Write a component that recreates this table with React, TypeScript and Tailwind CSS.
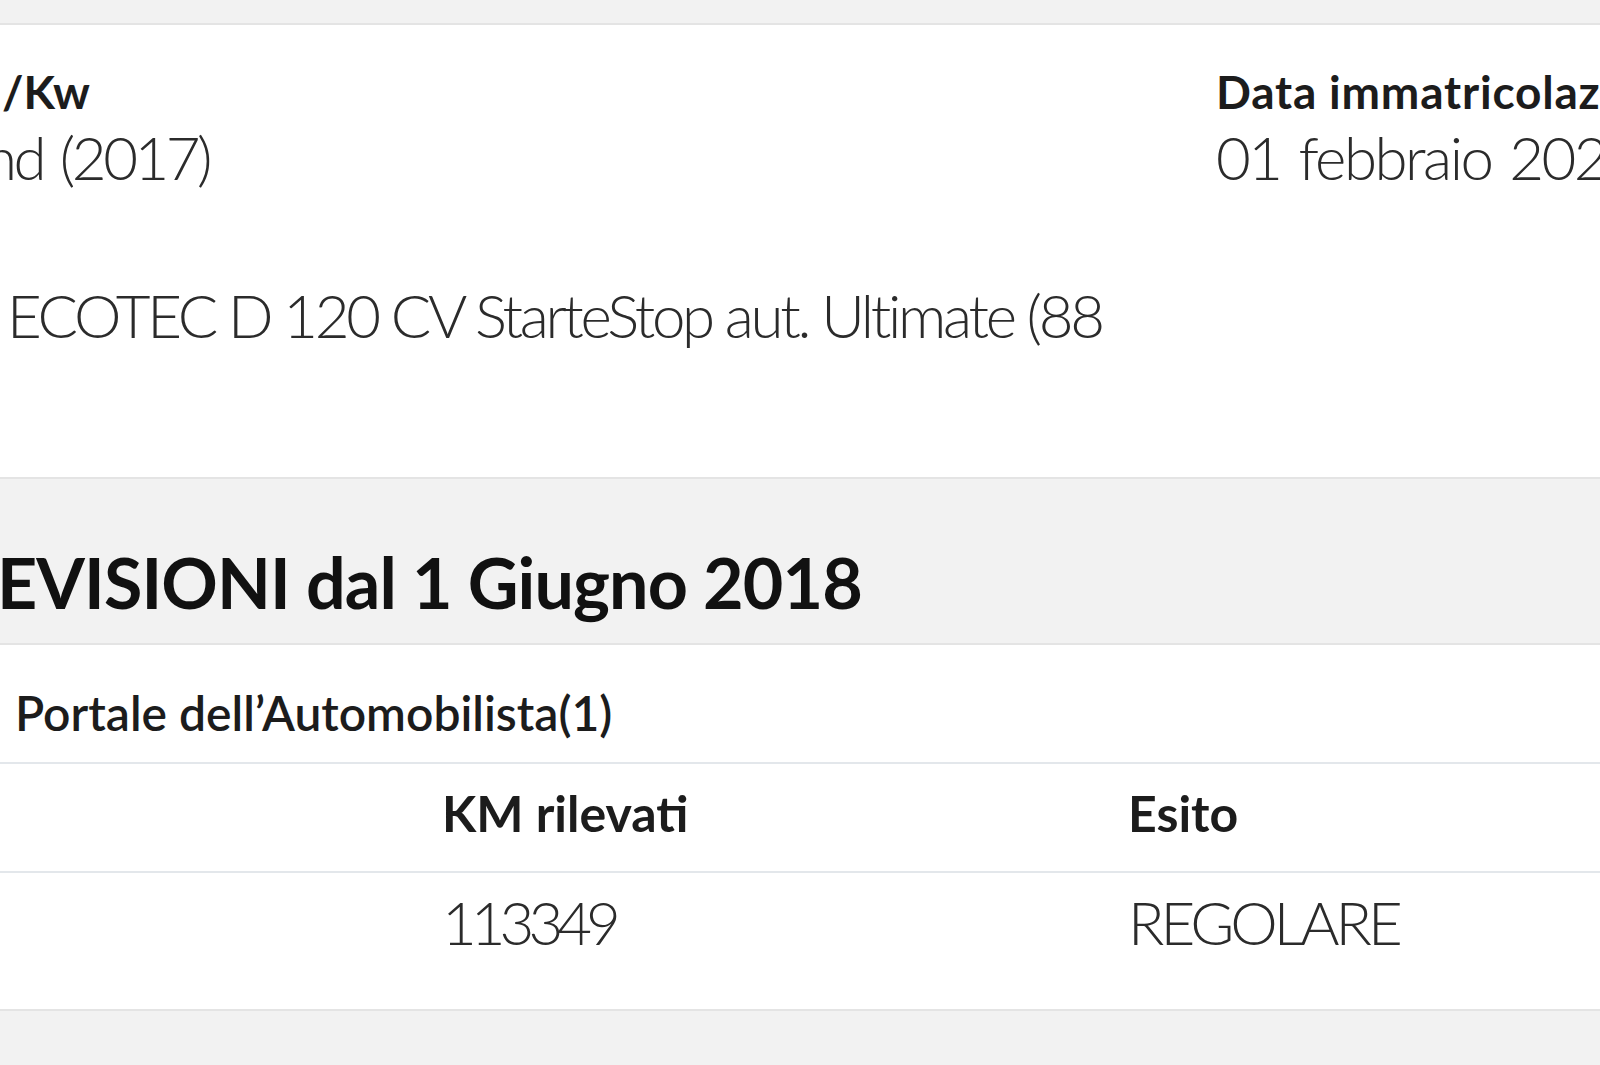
import React from "react";

const font = { fontFamily: "Lato, 'Noto Sans', sans-serif" };

export default function App() {
  return (
    <div
      className="w-[1600px] h-[1065px] overflow-hidden bg-[#f2f2f2] text-[#1c1c1c]"
      style={font}
    >
      <div className="h-[23px]" />
      {/* vehicle data */}
      <section className="bg-white border-y-2 border-[#e4e4e4] pt-[44px] pb-[132px]">
        <div className="flex">
          <div className="w-[1216px] shrink-0">
            <div className="text-[46px] leading-none font-bold whitespace-nowrap ml-[2px]">/Kw</div>
            <div className="mt-[12px] h-[62px] text-[60px] leading-none font-light tracking-[-3.5px] [word-spacing:4px] text-[#2b2b2b] whitespace-nowrap -ml-[16px]">
              nd (2017)
            </div>
          </div>
          <div className="min-w-0 overflow-hidden">
            <div className="text-[46px] leading-none font-bold tracking-[0.8px] whitespace-nowrap">
              Data immatricolazione
            </div>
            <div className="mt-[12px] text-[60px] leading-none font-light tracking-[-2.5px] [word-spacing:4px] text-[#2b2b2b] whitespace-nowrap">
              01 febbraio 2021
            </div>
          </div>
        </div>
        <div className="mt-[96px] ml-[7px] text-[60px] leading-none font-light tracking-[-3.3px] text-[#2b2b2b] whitespace-nowrap">
          ECOTEC D 120 CV StarteStop aut. Ultimate (88
        </div>
      </section>

      {/* title */}
      <section className="pt-[68px] pb-[26px] border-b-2 border-[#e4e4e4]">
        <h2 className="-ml-[3px] text-[70px] leading-none font-bold tracking-[-0.9px] text-[#111] whitespace-nowrap">
          EVISIONI dal 1 Giugno 2018
        </h2>
      </section>

      {/* table */}
      <section className="bg-white border-b-2 border-[#e4e4e4]">
        <div className="pt-[44px] pb-[25px] pl-[15px] border-b-2 border-[#e3e7eb] text-[48px] leading-none font-semibold whitespace-nowrap">
          Portale dell’Automobilista(1)
        </div>
        <div className="grid grid-cols-[442px_686px_1fr] border-b-2 border-[#e3e7eb] pt-[24px] pb-[33px]">
          <div />
          <div className="text-[50px] leading-none font-bold whitespace-nowrap">KM rilevati</div>
          <div className="text-[50px] leading-none font-bold whitespace-nowrap">Esito</div>
        </div>
        <div className="grid grid-cols-[442px_686px_1fr] pt-[19px] pb-[57px]">
          <div />
          <div className="text-[60px] leading-none font-light tracking-[-6px] text-[#2b2b2b] whitespace-nowrap">
            113349
          </div>
          <div className="text-[60px] leading-none font-light tracking-[-4px] text-[#2b2b2b] whitespace-nowrap">
            REGOLARE
          </div>
        </div>
      </section>
    </div>
  );
}
